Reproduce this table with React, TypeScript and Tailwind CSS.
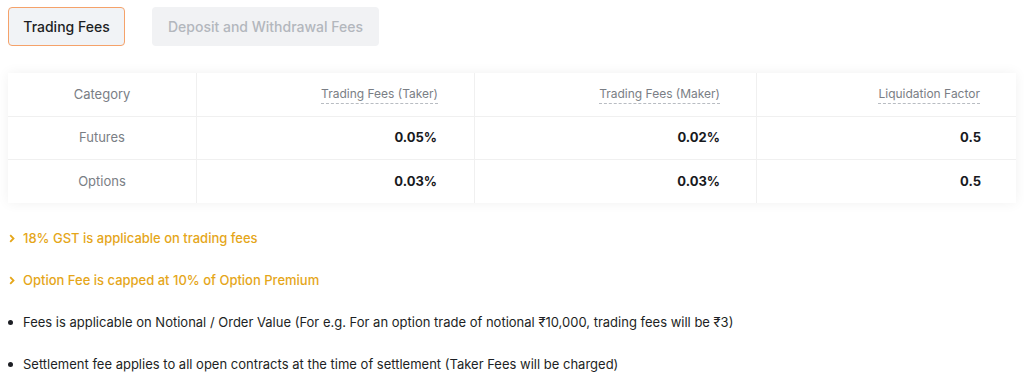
const rows = [
  { name: 'Futures', taker: '0.05%', maker: '0.02%', factor: '0.5' },
  { name: 'Options', taker: '0.03%', maker: '0.03%', factor: '0.5' },
]

export default function App() {
  return (
    <div className="w-[1024px] h-[377px] bg-white px-2 pt-[7px] text-[13px] overflow-hidden" style={{ fontFamily: 'Inter, "Noto Sans", sans-serif' }}>
      {/* Tabs */}
      <div className="flex gap-[27px]">
        <button className="h-[39px] w-[117px] rounded-[4px] border border-[#f5a26a] bg-[#f1f3f6] text-[14px] font-medium text-[#1d1f24]">
          Trading Fees
        </button>
        <button className="h-[39px] w-[227px] rounded-[4px] bg-[#f1f2f4] text-[14px] font-medium text-[#b3b7bd]">
          Deposit and Withdrawal Fees
        </button>
      </div>

      {/* Table */}
      <div className="mt-[27px] w-[1008px] bg-white shadow-[0_0_12px_rgba(0,0,0,0.06)]">
        <div className="grid grid-cols-[189px_278px_282px_259px] h-[44px] border-b border-[#f0f0f0] text-[#7a7e85]">
          <div className="flex items-center justify-center border-r border-[#f0f0f0]">Category</div>
          <HeadCell label="Trading Fees (Taker)" border />
          <HeadCell label="Trading Fees (Maker)" border />
          <HeadCell label="Liquidation Factor" />
        </div>
        {rows.map((r, i) => (
          <div key={r.name} className={`grid grid-cols-[189px_278px_282px_259px] h-[43px] ${i === 0 ? 'border-b border-[#f0f0f0]' : ''}`}>
            <div className="flex items-center justify-center border-r border-[#f0f0f0] text-[#7a7e85]">{r.name}</div>
            <div className="flex items-center justify-end pr-[37px] border-r border-[#f0f0f0] font-bold text-[#17191d]">{r.taker}</div>
            <div className="flex items-center justify-end pr-[36px] border-r border-[#f0f0f0] font-bold text-[#17191d]">{r.maker}</div>
            <div className="flex items-center justify-end pr-[35px] font-bold text-[#17191d]">{r.factor}</div>
          </div>
        ))}
      </div>

      {/* Notes */}
      <ul className="mt-[26px] flex flex-col gap-[23px]">
        <Note highlight>18% GST is applicable on trading fees</Note>
        <Note highlight>Option Fee is capped at 10% of Option Premium</Note>
        <Note>
          Fees is applicable on Notional / Order Value (For e.g. For an option trade of notional ₹10,000, trading fees will be ₹3)
        </Note>
        <Note>Settlement fee applies to all open contracts at the time of settlement (Taker Fees will be charged)</Note>
      </ul>
    </div>
  )
}

function Note({ highlight, children }: { highlight?: boolean; children: React.ReactNode }) {
  return (
    <li className={`flex items-center h-[19px] ${highlight ? 'text-[#e5a619] font-medium' : 'text-[#1d1f24]'}`}>
      <span className="w-[15px] flex items-center">
        {highlight ? (
          <svg width="6" height="9" viewBox="0 0 6 9" className="ml-[1px]">
            <path d="M1.2 1.2 L4.5 4.5 L1.2 7.8" fill="none" stroke="currentColor" strokeWidth="1.8" />
          </svg>
        ) : (
          <span className="w-[5px] h-[5px] rounded-full bg-[#1d1f24]" />
        )}
      </span>
      {children}
    </li>
  )
}

function HeadCell({ label, border }: { label: string; border?: boolean }) {
  return (
    <div className={`flex items-center justify-end pr-[36px] ${border ? 'border-r border-[#f0f0f0]' : ''}`}>
      <span className="text-[12px] border-b border-dashed border-[#b8bcc2] leading-[18px]">{label}</span>
    </div>
  )
}
